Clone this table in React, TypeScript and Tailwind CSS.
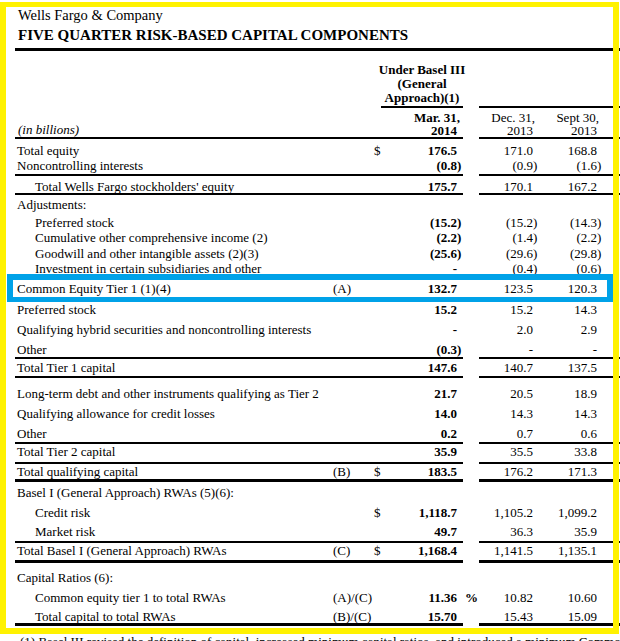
import React from "react";

type Line = "none" | "thin" | "thick";
interface R {
  label: string;
  indent?: boolean;
  refx?: string;
  dollar?: boolean;
  mar?: string;
  pct?: boolean;
  dec?: string;
  sept?: string;
  h: string;
  pt: string;
  line?: Line;
}

const rows: R[] = [
  { label: "Total equity", dollar: true, mar: "176.5", dec: "171.0", sept: "168.8", h: "h-[19px]", pt: "pt-[4px]" },
  { label: "Noncontrolling interests", mar: "(0.8)", dec: "(0.9)", sept: "(1.6)", h: "h-[18px]", pt: "pt-[0px]", line: "thin" },
  { label: "Total Wells Fargo stockholders' equity", indent: true, mar: "175.7", dec: "170.1", sept: "167.2", h: "h-[19px]", pt: "pt-[3px]", line: "thin" },
  { label: "Adjustments:", h: "h-[20px]", pt: "pt-[2px]" },
  { label: "Preferred stock", indent: true, mar: "(15.2)", dec: "(15.2)", sept: "(14.3)", h: "h-[15px]", pt: "pt-[0px]" },
  { label: "Cumulative other comprehensive income (2)", indent: true, mar: "(2.2)", dec: "(1.4)", sept: "(2.2)", h: "h-[16px]", pt: "pt-[0px]" },
  { label: "Goodwill and other intangible assets (2)(3)", indent: true, mar: "(25.6)", dec: "(29.6)", sept: "(29.8)", h: "h-[15px]", pt: "pt-[0px]" },
  { label: "Investment in certain subsidiaries and other", indent: true, mar: "-", dec: "(0.4)", sept: "(0.6)", h: "h-[15px]", pt: "pt-[0px]" },
  { label: "Common Equity Tier 1 (1)(4)", refx: "(A)", mar: "132.7", dec: "123.5", sept: "120.3", h: "h-[24px]", pt: "pt-[5px]" },
  { label: "Preferred stock", mar: "15.2", dec: "15.2", sept: "14.3", h: "h-[20px]", pt: "pt-[2px]" },
  { label: "Qualifying hybrid securities and noncontrolling interests", mar: "-", dec: "2.0", sept: "2.9", h: "h-[20px]", pt: "pt-[2px]" },
  { label: "Other", mar: "(0.3)", dec: "-", sept: "-", h: "h-[19px]", pt: "pt-[2px]", line: "thin" },
  { label: "Total Tier 1 capital", mar: "147.6", dec: "140.7", sept: "137.5", h: "h-[19px]", pt: "pt-[1px]", line: "thin" },
  { label: "Long-term debt and other instruments qualifying as Tier 2", mar: "21.7", dec: "20.5", sept: "18.9", h: "h-[26px]", pt: "pt-[8px]" },
  { label: "Qualifying allowance for credit losses", mar: "14.0", dec: "14.3", sept: "14.3", h: "h-[20px]", pt: "pt-[2px]" },
  { label: "Other", mar: "0.2", dec: "0.7", sept: "0.6", h: "h-[20px]", pt: "pt-[2px]", line: "thin" },
  { label: "Total Tier 2 capital", mar: "35.9", dec: "35.5", sept: "33.8", h: "h-[20px]", pt: "pt-[0px]", line: "thin" },
  { label: "Total qualifying capital", refx: "(B)", dollar: true, mar: "183.5", dec: "176.2", sept: "171.3", h: "h-[18px]", pt: "pt-[0px]", line: "thick" },
  { label: "Basel I (General Approach) RWAs (5)(6):", h: "h-[20px]", pt: "pt-[3px]" },
  { label: "Credit risk", indent: true, dollar: true, mar: "1,118.7", dec: "1,105.2", sept: "1,099.2", h: "h-[20px]", pt: "pt-[3px]" },
  { label: "Market risk", indent: true, mar: "49.7", dec: "36.3", sept: "35.9", h: "h-[21px]", pt: "pt-[2px]", line: "thin" },
  { label: "Total Basel I (General Approach) RWAs", refx: "(C)", dollar: true, mar: "1,168.4", dec: "1,141.5", sept: "1,135.1", h: "h-[20px]", pt: "pt-[0px]", line: "thick" },
  { label: "Capital Ratios (6):", h: "h-[25px]", pt: "pt-[7px]" },
  { label: "Common equity tier 1 to total RWAs", indent: true, refx: "(A)/(C)", mar: "11.36", pct: true, dec: "10.82", sept: "10.60", h: "h-[20px]", pt: "pt-[2px]" },
  { label: "Total capital to total RWAs", indent: true, refx: "(B)/(C)", mar: "15.70", dec: "15.43", sept: "15.09", h: "h-[18px]", pt: "pt-[1px]", line: "thick" },
];

function split(v?: string): [string, string] {
  if (!v) return ["", ""];
  if (v.startsWith("(") && v.endsWith(")")) return [v.slice(0, -1), ")"];
  return [v, ""];
}

function Row({ r }: { r: R }) {
  const b =
    r.line === "thin"
      ? "border-b-2 border-black"
      : r.line === "thick"
      ? "border-b-[3px] border-black"
      : "";
  const [m, ms] = split(r.mar);
  const [d, ds] = split(r.dec);
  const [s, ss] = split(r.sept);
  return (
    <div className="flex">
      <div className={`flex w-[448px] shrink-0 ${r.h} ${r.pt} ${b}`}>
        <div className={`flex-1 whitespace-nowrap ${r.indent ? "pl-[20px]" : "pl-[2px]"}`}>{r.label}</div>
        <div className="w-[41px] whitespace-nowrap">{r.refx ?? ""}</div>
        <div className="w-[7px]">{r.dollar ? "$" : ""}</div>
        <div className="w-[76px] text-right font-bold whitespace-nowrap">{m}</div>
        <div className="w-[6px] font-bold whitespace-nowrap">
          {ms}
          {r.pct ? <span className="pl-[8px]">%</span> : null}
        </div>
      </div>
      <div className="w-[16px] shrink-0" />
      <div className={`flex flex-1 ${r.h} ${r.pt} ${b}`}>
        <div className="w-[54px] text-right whitespace-nowrap">{d}</div>
        <div className="w-[4px]">{ds}</div>
        <div className="w-[60px] text-right whitespace-nowrap">{s}</div>
        <div className="w-[4px]">{ss}</div>
        <div className="flex-1" />
      </div>
    </div>
  );
}

export default function App() {
  return (
    <div className="relative w-[620px] h-[641px] overflow-hidden bg-white text-black [font-family:'Liberation_Serif','Times_New_Roman',serif]">
      <div className="pl-[15px] pt-[7px]">
        <div className="pl-[3px] text-[14.5px] leading-[16px] h-[16px] whitespace-nowrap">Wells Fargo &amp; Company</div>
        <div className="pl-[3px] mt-[4px] text-[15px] leading-[16px] h-[16px] font-bold whitespace-nowrap">
          FIVE QUARTER RISK-BASED CAPITAL COMPONENTS
        </div>
        <div className="mt-[5px] h-[3px] bg-black" />

        <div className="text-[13px] leading-[16px]">
          {/* column header */}
          <div className="flex">
            <div className="flex w-[448px] shrink-0 h-[88px] border-b-2 border-black">
              <div className="flex-1 flex items-end pb-[1px] pl-[3px]">
                <span className="italic leading-[12px]">(in billions)</span>
              </div>
              <div className="w-[82px] flex flex-col font-bold">
                <div className="h-[57px] pt-[12px] border-b-2 border-black leading-[14px]">
                  <div className="flex justify-center whitespace-nowrap">
                    <span>Under Basel III</span>
                  </div>
                  <div className="flex justify-center whitespace-nowrap">
                    <span>(General</span>
                  </div>
                  <div className="flex justify-center whitespace-nowrap">
                    <span>Approach)(1)</span>
                  </div>
                </div>
                <div className="pt-[3px] leading-[13px]">
                  <div className="text-right pr-[3px] whitespace-nowrap">Mar. 31,</div>
                  <div className="text-right pr-[6px] whitespace-nowrap">2014</div>
                </div>
              </div>
            </div>
            <div className="w-[16px] shrink-0" />
            <div className="flex flex-col flex-1 h-[88px] border-b-2 border-black">
              <div className="h-[57px] border-b-2 border-black" />
              <div className="flex pt-[3px] leading-[13px]">
                <div className="w-[58px]">
                  <div className="text-right pr-[2px] whitespace-nowrap">Dec. 31,</div>
                  <div className="text-right pr-[4px] whitespace-nowrap">2013</div>
                </div>
                <div className="w-[64px]">
                  <div className="text-right pr-[2px] whitespace-nowrap">Sept 30,</div>
                  <div className="text-right pr-[4px] whitespace-nowrap">2013</div>
                </div>
              </div>
            </div>
          </div>

          {rows.map((r, i) => (
            <Row key={i} r={r} />
          ))}

          <div className="mt-[8px] pl-[5px] whitespace-nowrap leading-[16px]">
            (1) Basel III revised the definition of capital, increased minimum capital ratios, and introduced a minimum Common Equity Tier 1 ratio.
          </div>
        </div>
      </div>

      {/* highlight boxes */}
      <div className="pointer-events-none absolute left-[7px] top-[274px] w-[606px] h-[28px] border-[6px] border-b-[5px] border-[#00a2e8]" />
      <div className="pointer-events-none absolute left-0 top-[2px] w-[619px] h-[632px] border-[6px] border-t-[5px] border-[#fff200]" />
    </div>
  );
}
